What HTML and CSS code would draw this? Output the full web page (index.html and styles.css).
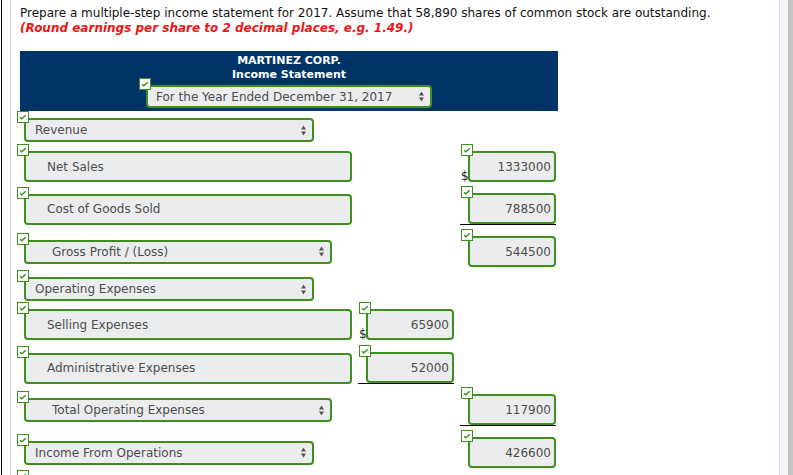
FILE: index.html
```html
<!DOCTYPE html>
<html lang="en">
<head>
<meta charset="utf-8">
<title>Income Statement</title>
<link rel="stylesheet" href="styles.css">
</head>
<body>
<div class="frame">
  <div class="edge"></div>
  <div class="main">
    <p class="lead">Prepare a multiple-step income statement for 2017. Assume that 58,890 shares of common stock are outstanding.<br><em class="note">(Round earnings per share to 2 decimal places, e.g. 1.49.)</em></p>

    <div class="head">
      <div class="title">MARTINEZ CORP.</div>
      <div class="title">Income Statement</div>
      <div class="fld sel hsel">
        <span class="chk"><svg viewBox="0 0 10 10" width="10" height="10"><path d="M2 5.2 L3.8 6.8 L7.8 3.2" fill="none" stroke="#3f8f1c" stroke-width="1.4"/></svg></span>
        <span>For the Year Ended December 31, 2017</span>
        <svg class="arw" viewBox="0 0 5 11" width="5" height="11"><path d="M0 4.5 L2.5 0.5 L5 4.5 Z M0 6.5 L5 6.5 L2.5 10.5 Z" fill="#555"/></svg>
      </div>
    </div>

    <div class="sheet">
      <div class="row">
        <div class="cell c1"><div class="fld sel w-short"><span class="chk"><svg viewBox="0 0 10 10" width="10" height="10"><path d="M2 5.2 L3.8 6.8 L7.8 3.2" fill="none" stroke="#3f8f1c" stroke-width="1.4"/></svg></span><span>Revenue</span><svg class="arw" viewBox="0 0 5 11" width="5" height="11"><path d="M0 4.5 L2.5 0.5 L5 4.5 Z M0 6.5 L5 6.5 L2.5 10.5 Z" fill="#555"/></svg></div></div>
      </div>

      <div class="row m2">
        <div class="cell c1"><div class="fld inp txt"><span class="chk"><svg viewBox="0 0 10 10" width="10" height="10"><path d="M2 5.2 L3.8 6.8 L7.8 3.2" fill="none" stroke="#3f8f1c" stroke-width="1.4"/></svg></span>Net Sales</div></div>
        <div class="cell c3"><div class="fld inp num"><span class="chk"><svg viewBox="0 0 10 10" width="10" height="10"><path d="M2 5.2 L3.8 6.8 L7.8 3.2" fill="none" stroke="#3f8f1c" stroke-width="1.4"/></svg></span><span class="dollar">$</span>1333000</div></div>
      </div>

      <div class="row m4">
        <div class="cell c1"><div class="fld inp txt"><span class="chk"><svg viewBox="0 0 10 10" width="10" height="10"><path d="M2 5.2 L3.8 6.8 L7.8 3.2" fill="none" stroke="#3f8f1c" stroke-width="1.4"/></svg></span>Cost of Goods Sold</div></div>
        <div class="cell c3 ul"><div class="fld inp num"><span class="chk"><svg viewBox="0 0 10 10" width="10" height="10"><path d="M2 5.2 L3.8 6.8 L7.8 3.2" fill="none" stroke="#3f8f1c" stroke-width="1.4"/></svg></span>788500</div></div>
      </div>

      <div class="row m4">
        <div class="cell c1"><div class="fld sel ind w-long"><span class="chk"><svg viewBox="0 0 10 10" width="10" height="10"><path d="M2 5.2 L3.8 6.8 L7.8 3.2" fill="none" stroke="#3f8f1c" stroke-width="1.4"/></svg></span><span>Gross Profit / (Loss)</span><svg class="arw" viewBox="0 0 5 11" width="5" height="11"><path d="M0 4.5 L2.5 0.5 L5 4.5 Z M0 6.5 L5 6.5 L2.5 10.5 Z" fill="#555"/></svg></div></div>
        <div class="cell c3"><div class="fld inp num"><span class="chk"><svg viewBox="0 0 10 10" width="10" height="10"><path d="M2 5.2 L3.8 6.8 L7.8 3.2" fill="none" stroke="#3f8f1c" stroke-width="1.4"/></svg></span>544500</div></div>
      </div>

      <div class="row m3">
        <div class="cell c1"><div class="fld sel w-short"><span class="chk"><svg viewBox="0 0 10 10" width="10" height="10"><path d="M2 5.2 L3.8 6.8 L7.8 3.2" fill="none" stroke="#3f8f1c" stroke-width="1.4"/></svg></span><span>Operating Expenses</span><svg class="arw" viewBox="0 0 5 11" width="5" height="11"><path d="M0 4.5 L2.5 0.5 L5 4.5 Z M0 6.5 L5 6.5 L2.5 10.5 Z" fill="#555"/></svg></div></div>
      </div>

      <div class="row m1">
        <div class="cell c1"><div class="fld inp txt"><span class="chk"><svg viewBox="0 0 10 10" width="10" height="10"><path d="M2 5.2 L3.8 6.8 L7.8 3.2" fill="none" stroke="#3f8f1c" stroke-width="1.4"/></svg></span>Selling Expenses</div></div>
        <div class="cell c2"><div class="fld inp num"><span class="chk"><svg viewBox="0 0 10 10" width="10" height="10"><path d="M2 5.2 L3.8 6.8 L7.8 3.2" fill="none" stroke="#3f8f1c" stroke-width="1.4"/></svg></span><span class="dollar">$</span>65900</div></div>
      </div>

      <div class="row m5">
        <div class="cell c1"><div class="fld inp txt"><span class="chk"><svg viewBox="0 0 10 10" width="10" height="10"><path d="M2 5.2 L3.8 6.8 L7.8 3.2" fill="none" stroke="#3f8f1c" stroke-width="1.4"/></svg></span>Administrative Expenses</div></div>
        <div class="cell c2 ul"><div class="fld inp num"><span class="chk"><svg viewBox="0 0 10 10" width="10" height="10"><path d="M2 5.2 L3.8 6.8 L7.8 3.2" fill="none" stroke="#3f8f1c" stroke-width="1.4"/></svg></span>52000</div></div>
      </div>

      <div class="row m3">
        <div class="cell c1"><div class="fld sel ind w-long"><span class="chk"><svg viewBox="0 0 10 10" width="10" height="10"><path d="M2 5.2 L3.8 6.8 L7.8 3.2" fill="none" stroke="#3f8f1c" stroke-width="1.4"/></svg></span><span>Total Operating Expenses</span><svg class="arw" viewBox="0 0 5 11" width="5" height="11"><path d="M0 4.5 L2.5 0.5 L5 4.5 Z M0 6.5 L5 6.5 L2.5 10.5 Z" fill="#555"/></svg></div></div>
        <div class="cell c3 ul"><div class="fld inp num"><span class="chk"><svg viewBox="0 0 10 10" width="10" height="10"><path d="M2 5.2 L3.8 6.8 L7.8 3.2" fill="none" stroke="#3f8f1c" stroke-width="1.4"/></svg></span>117900</div></div>
      </div>

      <div class="row m4">
        <div class="cell c1"><div class="fld sel w-short"><span class="chk"><svg viewBox="0 0 10 10" width="10" height="10"><path d="M2 5.2 L3.8 6.8 L7.8 3.2" fill="none" stroke="#3f8f1c" stroke-width="1.4"/></svg></span><span>Income From Operations</span><svg class="arw" viewBox="0 0 5 11" width="5" height="11"><path d="M0 4.5 L2.5 0.5 L5 4.5 Z M0 6.5 L5 6.5 L2.5 10.5 Z" fill="#555"/></svg></div></div>
        <div class="cell c3"><div class="fld inp num"><span class="chk"><svg viewBox="0 0 10 10" width="10" height="10"><path d="M2 5.2 L3.8 6.8 L7.8 3.2" fill="none" stroke="#3f8f1c" stroke-width="1.4"/></svg></span>426600</div></div>
      </div>

      <div class="row m2">
        <div class="cell c1"><div class="fld sel w-short"><span class="chk"><svg viewBox="0 0 10 10" width="10" height="10"><path d="M2 5.2 L3.8 6.8 L7.8 3.2" fill="none" stroke="#3f8f1c" stroke-width="1.4"/></svg></span><span></span><svg class="arw" viewBox="0 0 5 11" width="5" height="11"><path d="M0 4.5 L2.5 0.5 L5 4.5 Z M0 6.5 L5 6.5 L2.5 10.5 Z" fill="#555"/></svg></div></div>
      </div>
    </div>
  </div>
  <div class="rail"></div>
  <div class="track"></div>
</div>
</body>
</html>
```
FILE: styles.css
```css
* { box-sizing: border-box; }
html, body { margin: 0; padding: 0; }
body {
  width: 793px;
  height: 475px;
  overflow: hidden;
  background: #fff;
  font-family: "DejaVu Sans", Verdana, sans-serif;
  color: #333;
}
.frame { display: flex; height: 475px; }
.edge { flex: 0 0 9px; margin-left: 1px; border-left: 1px solid #000; }
.main {
  flex: 1 1 auto;
  min-width: 0;
  border-left: 1px solid #c9d6e3;
  border-right: 1px solid #d5dde5;
  padding-left: 6px;
  overflow: hidden;
}
.rail { flex: 0 0 9px; background: #f4f7fb; border-right: 1px solid #b7bcc1; }
.track { flex: 0 0 4px; background: #c5c5c5; }

.lead {
  margin: 6px 0 0 3px;
  font-size: 12px;
  line-height: 15px;
  color: #111;
}
.note { font-style: italic; font-weight: bold; color: #f01414; }

.head {
  margin: 15px 0 0 3px;
  width: 538px;
  height: 60px;
  background: #003469;
  padding-top: 3px;
  display: flex;
  flex-direction: column;
  align-items: center;
}
.title { color: #fff; font-weight: bold; font-size: 11px; line-height: 14px; }

.fld {
  position: relative;
  display: flex;
  align-items: center;
  background: #ebecee;
  border: 2px solid #3f8f1c;
  border-radius: 4px;
  color: #4d4d4d;
  font-size: 12px;
  white-space: nowrap;
}
.sel { height: 24px; justify-content: space-between; padding: 0 6px 0 9px; }
.sel.ind { padding-left: 26px; }
.hsel { width: 286px; height: 23px; margin-top: 3px; padding-left: 8px; }
.w-short { width: 290px; }
.w-long { width: 308px; }
.inp { height: 31px; }
.txt { width: 328px; padding-left: 21px; }
.num { width: 88px; justify-content: flex-end; padding-right: 3px; }
.arw { flex: 0 0 auto; }

.chk {
  position: absolute;
  left: -9px;
  top: -9px;
  width: 12px;
  height: 12px;
  background: #fff;
  border: 1px solid #3f8f1c;
  display: flex;
  align-items: center;
  justify-content: center;
  z-index: 1;
}
.chk svg { display: block; }
.dollar {
  position: absolute;
  left: -9px;
  bottom: -2px;
  font-size: 12px;
  line-height: 12px;
  color: #222;
}

.sheet { display: flex; flex-direction: column; }
.row {
  display: grid;
  grid-template-columns: 335px 96px 96px;
  column-gap: 6px;
  align-items: center;
}
.m1 { margin-top: 1px; }
.m2 { margin-top: 2px; }
.m3 { margin-top: 3px; }
.m4 { margin-top: 4px; }
.m5 { margin-top: 5px; }
.cell { padding-top: 7px; }
.c1 { grid-column: 1; padding-left: 7px; }
.c2 { grid-column: 2; padding-left: 8px; }
.c3 { grid-column: 3; padding-left: 8px; }
.ul { border-bottom: 1px solid #000; }
```
